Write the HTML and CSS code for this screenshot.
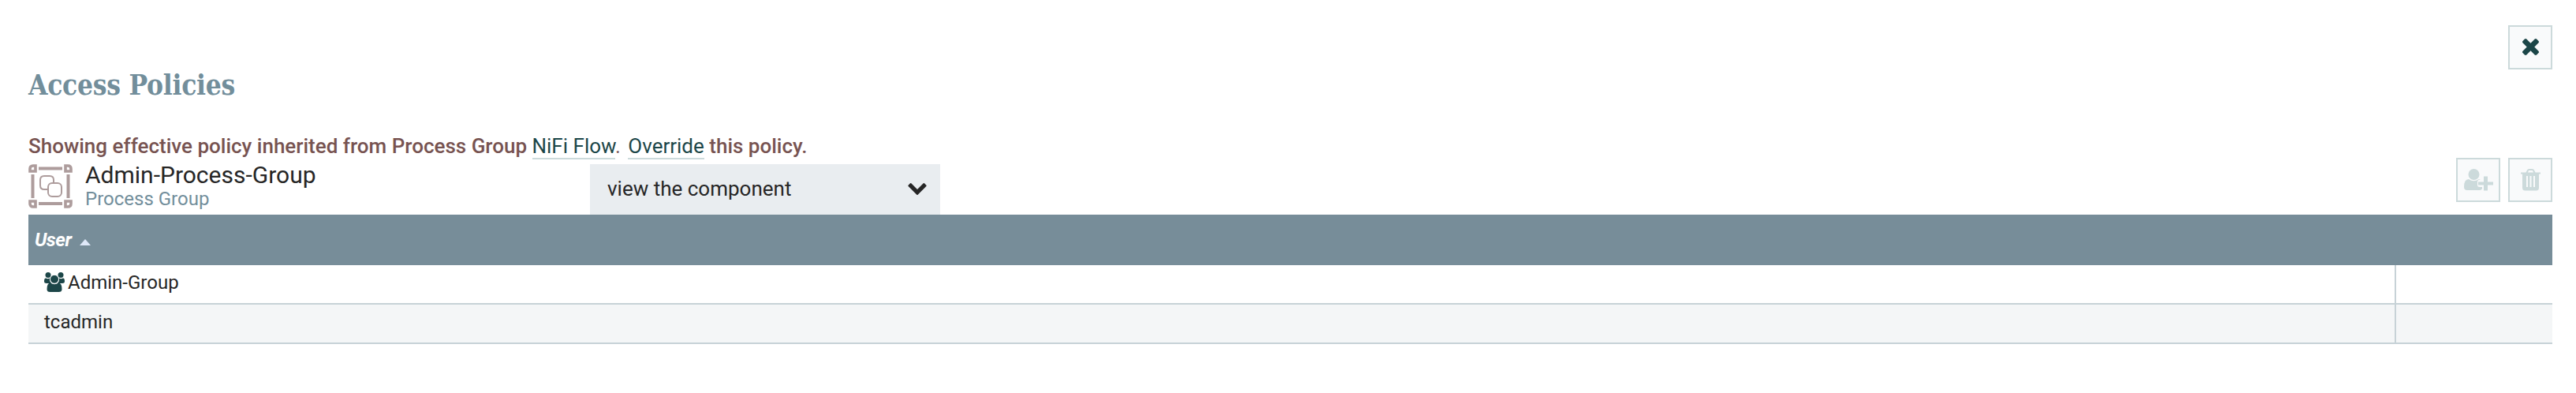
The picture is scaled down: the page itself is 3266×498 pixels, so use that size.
FILE: index.html
```html
<!DOCTYPE html>
<html lang="en">
<head>
<meta charset="utf-8">
<title>Access Policies</title>
<link rel="stylesheet" href="styles.css">
</head>
<body>
<main class="shell">
  <header class="top">
    <h1 class="title">Access Policies</h1>
    <button class="btn" aria-label="Close">
      <svg class="icon-close" viewBox="302 366 1188 1188"><path d="M1490 1322q0 40-28 68l-136 136q-28 28-68 28t-68-28l-294-294-294 294q-28 28-68 28t-68-28l-136-136q-28-28-28-68t28-68l294-294-294-294q-28-28-28-68t28-68l136-136q28-28 68-28t68 28l294 294 294-294q28-28 68-28t68 28l136 136q28 28 28 68t-28 68l-294 294 294 294q28 28 28 68z"/></svg>
    </button>
  </header>
  <p class="message">Showing effective policy inherited from Process Group <a class="link">NiFi Flow</a><span class="dot">. </span><a class="link">Override</a> this policy.</p>
  <section class="controls">
    <div class="component">
      <svg class="icon-group" viewBox="0 0 56 56" fill="none" stroke="#ad9c9c">
        <path stroke-width="4" d="M13 5.500h30M13 50h30M5.500 13v30M50.500 13v30"/>
        <g stroke-width="3.600">
          <path d="M9 2H6Q2 2 2 6V9H9zM47 2h3q4 0 4 4v3h-7zM9 54H6Q2 54 2 50V47H9zM47 54h3q4 0 4-4v-3h-7z"/>
        </g>
        <path stroke-width="2" d="M24 32h-4q-5 0-5-5v-7q0-5 5-5h7q5 0 5 5v3"/>
        <rect stroke-width="2" x="25" y="24" width="17" height="17" rx="5"/>
      </svg>
      <div class="names">
        <div class="name">Admin-Process-Group</div>
        <div class="type">Process Group</div>
      </div>
    </div>
    <div class="select">
      <span>view the component</span>
      <svg class="icon-chevron" viewBox="90 532 1612 1036"><path d="M1683 808l-742 741q-19 19-45 19t-45-19l-742-741q-19-19-19-45.500t19-45.500l166-165q19-19 45-19t45 19l531 531 531-531q19-19 45-19t45 19l166 165q19 19 19 45.500t-19 45.500z"/></svg>
    </div>
    <div class="actions">
      <button class="btn btn-off" aria-label="Add user">
        <svg class="icon-add" viewBox="0 0 37 28"><circle cx="12.500" cy="7" r="7"/><path d="M6 13q6 4.500 13 0 1.500 0 2 .5-4 0-4 3v4q0 2.500 3 2.500h3v2q-1 2-3 2H4q-4 0-4-4Q0 13 6 13z"/><path d="M25 9.500h5v7h7v4h-7v7h-5v-7h-7v-4h7z"/></svg>
      </button>
      <button class="btn btn-off" aria-label="Delete policy">
        <svg class="icon-trash" viewBox="0 0 25 28"><path fill-rule="evenodd" d="M0 4.500h6.500L8 1.500Q8.700 0 10.500 0h4q1.800 0 2.500 1.500l1.500 3H25v2h-2V24q0 3.500-3.500 3.500h-14Q2 27.500 2 24V6.500H0zM9 4.500h7l-1-2.500h-5zM7 9v14h2V9zM11.500 9v14h2V9zM16 9v14h2V9z"/></svg>
      </button>
    </div>
  </section>
  <section class="table">
    <div class="thead"><span class="sorted">User</span><i class="arrow"></i></div>
    <div class="row">
      <div class="cell cell-user">
        <svg class="icon-users" viewBox="0 0 26 25"><circle cx="5" cy="3.500" r="3.500"/><circle cx="21" cy="3.500" r="3.500"/><path d="M2 7.500q3 1.500 5 0Q6.500 11 9 14H3Q0 14 0 11.500 0 7.500 2 7.500zM24 7.500q-3 1.500-5 0 .5 3.500-2 6.500h6q3 0 3-2.500 0-4-2-4z"/><circle class="head" cx="13" cy="8.800" r="5.500"/><path d="M8 13.500q5 3.500 10 0 4.500 0 4.500 8 0 3.500-4 3.500h-11q-4 0-4-3.500 0-8 4.500-8z"/></svg>
        <span>Admin-Group</span>
      </div>
      <div class="cell cell-actions"></div>
    </div>
    <div class="row row-odd">
      <div class="cell cell-user"><span>tcadmin</span></div>
      <div class="cell cell-actions"></div>
    </div>
  </section>
</main>
</body>
</html>
```
FILE: styles.css
```css
* { box-sizing: border-box; }
body { margin: 0; background: #fff; color: #262626; font-family: Roboto, "Liberation Sans", sans-serif; font-size: 26px; }
.shell { padding: 32px 30px 0 36px; }
.top { display: flex; justify-content: space-between; align-items: flex-start; height: 136px; }
.title { margin: 56px 0 0; font: bold 35px/40px "Roboto Slab", "DejaVu Serif Condensed", "DejaVu Serif", serif; font-stretch: condensed; letter-spacing: -0.25px; color: #728e9b; white-space: nowrap; }
.btn { display: flex; align-items: center; justify-content: center; width: 56px; height: 56px; padding: 0; border: 2px solid #ccdadb; background: #f9fafb; fill: #004849; }
.btn-off { fill: #ccdadb; }
.icon-close { width: 21px; height: 21px; margin-bottom: 1px; fill: #1c4648; }
.message { margin: 0; height: 40px; line-height: 34px; font-weight: 500; color: #775351; white-space: pre; }
.link { font-weight: 400; color: #1c4648; border-bottom: 2px solid #ccdadb; }
.dot { margin-right: 3px; font-weight: 400; }
.controls { display: flex; height: 64px; }
.component { display: flex; width: 712px; }
.icon-group { width: 56px; height: 56px; }
.names { padding-left: 16px; }
.name { font-size: 30px; line-height: 28px; }
.type { margin-top: 1px; font-size: 24px; line-height: 30px; color: #728e9b; }
.select { display: flex; align-items: center; justify-content: space-between; width: 444px; height: 64px; padding: 0 17px 2px 22px; background: #e9edf0; }
.icon-chevron { width: 24px; height: 15px; fill: #262626; }
.actions { display: flex; gap: 10px; margin: -8px 0 0 auto; }
.icon-add { width: 37px; height: 28px; }
.icon-trash { width: 25px; height: 28px; }
.thead { display: flex; align-items: center; height: 64px; padding-left: 8px; background: #778d99; color: #fff; font-size: 24px; }
.sorted { font-style: italic; font-weight: 700; letter-spacing: -0.5px; }
.arrow { margin: 5px 0 0 11px; border: 7px solid transparent; border-top: 0; border-bottom: 8px solid #dfe8f8; }
.row { display: flex; height: 50px; border-bottom: 2px solid #c7d2d7; font-size: 24px; }
.row-odd { background: #f4f6f7; }
.cell-user { display: flex; align-items: center; gap: 4px; width: 3002px; padding: 0 0 4px 20px; border-right: 2px solid #c7d2d7; }
.cell-actions { flex: 1; }
.icon-users { width: 26px; height: 25px; margin-top: -2px; fill: #1c4648; }
.head { stroke: #fff; stroke-width: 1; }
```
